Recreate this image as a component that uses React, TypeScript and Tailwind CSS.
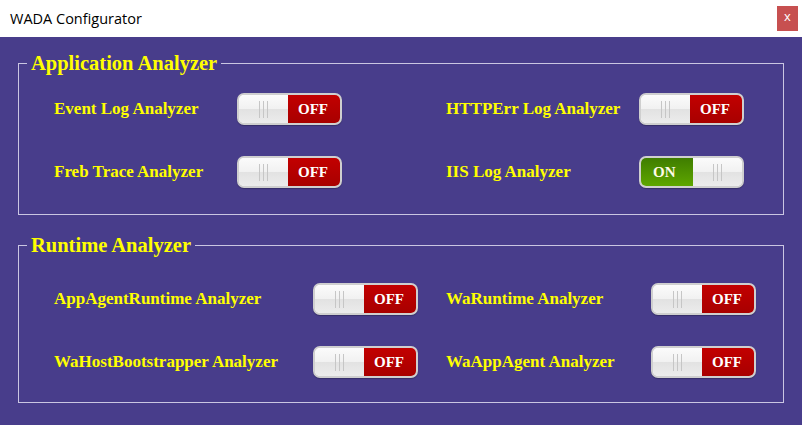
import React from 'react';

type Item = { label: string; on: boolean };

function Toggle({ on }: { on: boolean }) {
  const thumb = (
    <div className="relative h-full w-[49px] bg-[linear-gradient(#fbfbfb_0%,#f1f1f1_50%,#e2e2e2_51%,#ececec_100%)] flex items-center justify-center gap-[3px]">
      <span className="w-[1px] h-[17px] bg-[#c6c6c6]" />
      <span className="w-[1px] h-[17px] bg-[#c6c6c6]" />
      <span className="w-[1px] h-[17px] bg-[#c6c6c6]" />
    </div>
  );
  return (
    <div className="flex h-[32px] w-[105px] shrink-0 overflow-hidden rounded-[7px] border-2 border-[#cfcfcf] bg-white shadow-[0_1px_1px_rgba(0,0,0,0.25)]">
      {on ? (
        <>
          <div className="flex flex-1 items-center pl-[12px] bg-[linear-gradient(#3f7d00,#5ea600)] text-[15px] font-bold text-[#fffbe8]">ON</div>
          {thumb}
        </>
      ) : (
        <>
          {thumb}
          <div className="flex flex-1 items-center justify-center pr-[2px] bg-[linear-gradient(#c20000,#a80000)] text-[15px] font-bold text-white">OFF</div>
        </>
      )}
    </div>
  );
}

function Group({
  title,
  left,
  right,
  leftW,
  rightW,
  pad,
}: {
  title: string;
  left: Item[];
  right: Item[];
  leftW: string;
  rightW: string;
  pad: string;
}) {
  return (
    <fieldset className={`mx-[18px] border border-[#cac6e2] ${pad}`}>
      <legend className="ml-[8px] px-[4px] text-[20.5px] leading-[24px] font-bold text-[#ffff00]">{title}</legend>
      <div className="flex pl-[35px]">
        <div className="flex w-[392px] flex-col gap-[31px]">
          {left.map((it) => (
            <div key={it.label} className="flex items-center">
              <span className={`${leftW} text-[17px] font-bold text-[#ffff00]`}>{it.label}</span>
              <Toggle on={it.on} />
            </div>
          ))}
        </div>
        <div className="flex flex-col gap-[31px]">
          {right.map((it) => (
            <div key={it.label} className="flex items-center">
              <span className={`${rightW} text-[17px] font-bold text-[#ffff00]`}>{it.label}</span>
              <Toggle on={it.on} />
            </div>
          ))}
        </div>
      </div>
    </fieldset>
  );
}

export default function App() {
  return (
    <div className="w-[802px] h-[425px] overflow-hidden flex flex-col bg-[#483d8b] font-['Liberation_Serif',serif]">
      <div className="flex h-[37px] items-center justify-between bg-white pl-[10px] pr-[4px]">
        <span className="font-['Open_Sans',sans-serif] text-[14.5px] text-black">WADA Configurator</span>
        <button className="flex h-[25px] w-[21px] items-center justify-center bg-[#c75050] pb-[3px] font-['Open_Sans',sans-serif] text-[13px] text-white">
          x
        </button>
      </div>
      <div className="flex flex-col gap-[18px] pt-[14px]">
        <Group
          title="Application Analyzer"
          leftW="w-[183px]"
          rightW="w-[193px]"
          pad="pt-[18px] pb-[26px]"
          left={[
            { label: 'Event Log Analyzer', on: false },
            { label: 'Freb Trace Analyzer', on: false },
          ]}
          right={[
            { label: 'HTTPErr Log Analyzer', on: false },
            { label: 'IIS Log Analyzer', on: true },
          ]}
        />
        <Group
          title="Runtime Analyzer"
          leftW="w-[259px]"
          rightW="w-[205px]"
          pad="pt-[26px] pb-[24px]"
          left={[
            { label: 'AppAgentRuntime Analyzer', on: false },
            { label: 'WaHostBootstrapper Analyzer', on: false },
          ]}
          right={[
            { label: 'WaRuntime Analyzer', on: false },
            { label: 'WaAppAgent Analyzer', on: false },
          ]}
        />
      </div>
    </div>
  );
}
